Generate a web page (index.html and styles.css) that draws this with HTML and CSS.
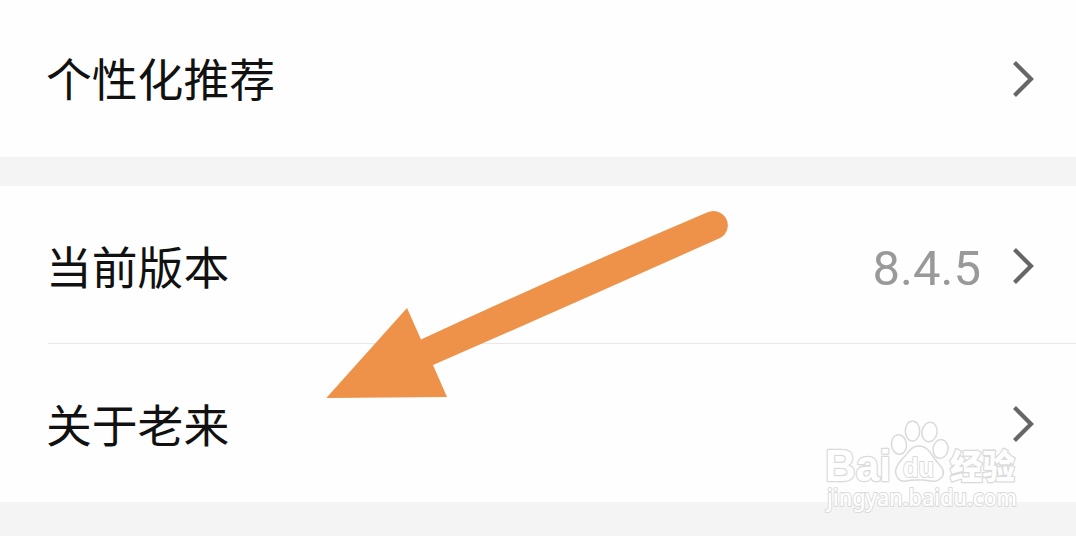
FILE: index.html
```html
<!DOCTYPE html>
<html lang="zh-CN">
<head>
<meta charset="utf-8">
<title>设置</title>
<link rel="stylesheet" href="styles.css">
</head>
<body>
<main class="screen">
  <section class="group">
    <div class="row row-first">
      <span class="label">个性化推荐</span>
      <svg class="chevron" viewBox="0 0 22 38"><path d="M2.500 2.500 19 19 2.500 35.500"/></svg>
    </div>
  </section>
  <section class="group">
    <div class="row row-version">
      <span class="label">当前版本</span>
      <span class="value">8.4.5</span>
      <svg class="chevron" viewBox="0 0 22 38"><path d="M2.500 2.500 19 19 2.500 35.500"/></svg>
    </div>
    <div class="divider"></div>
    <div class="row">
      <span class="label">关于老来</span>
      <svg class="chevron" viewBox="0 0 22 38"><path d="M2.500 2.500 19 19 2.500 35.500"/></svg>
    </div>
  </section>
  <svg class="arrow" viewBox="0 0 410 200">
    <path d="M6.300 188 87 98 101 129.500Q240 65 387 2.500A14 14 0 0 1 400 28Q255 93 113 155L127 187Z"/>
  </svg>
  <svg class="watermark" viewBox="820 410 205 110">
    <g class="mark">
      <text class="brand" x="825" y="480.500" font-size="45" textLength="66" lengthAdjust="spacingAndGlyphs">Bai</text>
      <ellipse cx="899" cy="444.500" rx="7.500" ry="9.800" transform="rotate(-8 899 444.500)"/>
      <ellipse cx="912.500" cy="431" rx="7.200" ry="10"/>
      <ellipse cx="929.500" cy="432" rx="7.500" ry="9.800" transform="rotate(10 929.500 432)"/>
      <ellipse cx="940.500" cy="449" rx="7.500" ry="9.500" transform="rotate(10 940.500 449)"/>
      <path d="M919 446C910 446 908 454 903 458C899 463 895.500 466 895.500 472C896 478 900 482 906 481C912 479.500 916 480 923 480C931 481 936 483 941 478C946 473 942 467 938 463C932 457 929 446 919 446Z"/>
      <text class="du" x="903" y="476.500" font-size="28" textLength="31" lengthAdjust="spacingAndGlyphs">du</text>
      <text class="brand" x="950" y="478.500" font-size="34" textLength="65" lengthAdjust="spacingAndGlyphs">经验</text>
      <text class="domain" x="827" y="505.500" font-size="23" textLength="190" lengthAdjust="spacingAndGlyphs">jingyan.baidu.com</text>
    </g>
  </svg>
</main>
</body>
</html>
```
FILE: styles.css
```css
body {
  margin: 0;
  background: #f4f4f4;
  font-family: "Noto Sans CJK SC", sans-serif;
}

.screen {
  position: relative;
  display: flex;
  flex-direction: column;
  gap: 29px;
  height: 536px;
  overflow: hidden;
}

.group {
  background: #fefefe;
}

.row {
  box-sizing: border-box;
  display: flex;
  align-items: center;
  height: 158px;
  padding: 2px 42px 0 46px;
}

.row-first {
  height: 157px;
  padding-top: 0;
}

.row-version {
  height: 157px;
  padding-top: 3px;
}

.label {
  flex: 1;
  margin-top: -3px;
  color: #111;
  font-size: 45.800px;
  line-height: 60px;
}

.value {
  margin-right: 31px;
  padding-top: 6px;
  color: #999;
  font-family: Roboto, sans-serif;
  font-size: 49px;
  line-height: 60px;
}

.chevron {
  width: 22px;
  height: 38px;
  fill: none;
  stroke: #666;
  stroke-width: 4.200;
}

.divider {
  height: 1px;
  margin-left: 48px;
  background: #e8e8e8;
}

.arrow {
  position: absolute;
  left: 320px;
  top: 210px;
  width: 410px;
  height: 200px;
  fill: #ed9248;
}

.watermark {
  position: absolute;
  left: 820px;
  top: 410px;
  width: 205px;
  height: 110px;
  overflow: visible;
}

.mark {
  fill: #fff;
  stroke: #dadada;
  stroke-width: 1.500;
  stroke-linejoin: round;
}

.brand {
  font-family: "Liberation Sans", "Noto Sans CJK SC", sans-serif;
  font-weight: 900;
  paint-order: stroke;
  stroke-width: 2.600;
}

.du {
  font-family: "Liberation Sans", sans-serif;
  font-weight: 700;
  paint-order: stroke;
  stroke-width: 2;
}

.domain {
  font-family: "Noto Sans", sans-serif;
  font-weight: 500;
  paint-order: stroke;
  stroke-width: 2;
}
```
